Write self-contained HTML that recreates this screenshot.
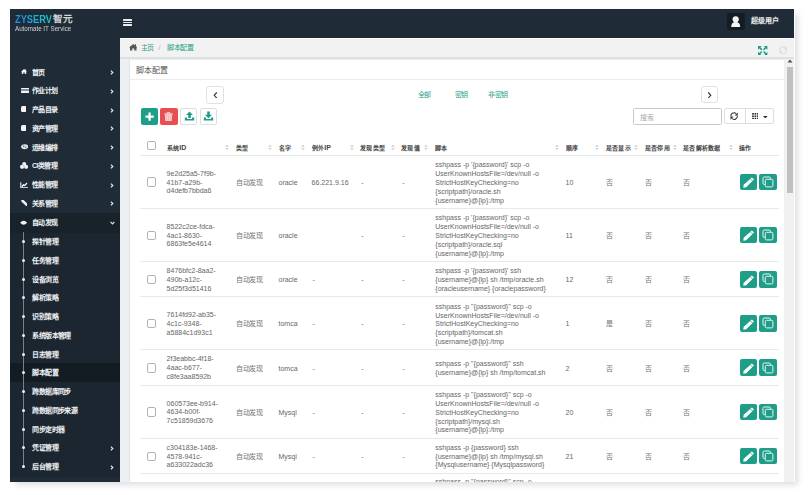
<!DOCTYPE html>
<html lang="zh-CN"><head><meta charset="utf-8"><style>
*{box-sizing:border-box;margin:0;padding:0}
html,body{width:808px;height:495px;overflow:hidden;background:#fff;font-family:"Liberation Sans",sans-serif;}
.abs{position:absolute}
#frame{position:absolute;left:10px;top:9px;width:784px;height:473px;background:#1f2b36;overflow:hidden}
#shadow{position:absolute;left:10px;top:9px;width:785.3px;height:473px;background:#fff;box-shadow:3.5px 3.5px 6px -1px rgba(0,0,0,0.13)}
.t{position:absolute;white-space:nowrap;line-height:1}
.side{color:#eef0f2;font-size:7px;font-weight:bold;letter-spacing:-0.55px}
.chev{position:absolute;left:110px;width:5px;height:5px}
.cell{position:absolute;white-space:nowrap;font-size:7px;color:#666;line-height:8.8px}
.cj{letter-spacing:-0.45px}
.cell .cj{color:#747474}
.hd{position:absolute;white-space:nowrap;font-size:7px;color:#444;font-weight:bold;line-height:7px}
.hd .cj{font-size:6px;letter-spacing:0.3px}
.cb{position:absolute;width:9.5px;height:9.5px;border:1px solid #b3b3b3;border-radius:2px;background:#fff}
.btn{position:absolute;border-radius:2px}
.hr{position:absolute;left:140px;width:639px;height:1px;background:#e9e9e9}
.sort{position:absolute;width:4px;height:7px}
</style></head>
<body>
<div class="abs" style="left:0;top:0;width:808px;height:495px;background:#fff"></div>
<div id="shadow"></div>
<div id="frame">
<div class="t" style="left:5px;top:4px;font-size:11.4px;transform:scaleX(0.815);transform-origin:0 0;font-weight:bold;background:linear-gradient(90deg,#1b8fe6 0%,#18b4dc 60%,#16d2c6 100%);-webkit-background-clip:text;color:transparent;line-height:12px">ZYSERV</div>
<div class="t" style="left:43.2px;top:5px;font-size:9.6px;color:#d2d4d6;font-weight:bold;line-height:10px">智元</div>
<div class="t" style="left:5.4px;top:16px;font-size:6.8px;color:#d0d3d6;line-height:7px;transform:scaleX(0.915);transform-origin:0 0">Automate IT Service</div>
<div class="abs" style="left:113.3px;top:9.9px;width:8.6px;height:1.9px;background:#ececec;border-radius:0.5px"></div>
<div class="abs" style="left:113.3px;top:12.55px;width:8.6px;height:1.9px;background:#ececec;border-radius:0.5px"></div>
<div class="abs" style="left:113.3px;top:15.2px;width:8.6px;height:1.9px;background:#ececec;border-radius:0.5px"></div>
<div class="abs" style="left:717px;top:4px;width:17.5px;height:16.7px;background:#151d24;border-radius:2px"></div>
<svg class="abs" style="left:721.4px;top:6.6px" width="9.4" height="11" viewBox="0 0 9.4 11"><circle cx="4.7" cy="3.3" r="3.1" fill="#f4f4f4"/><path d="M0.2 11 Q0.2 6 4.7 6 Q9.2 6 9.2 11Z" fill="#f4f4f4"/></svg>
<div class="t" style="left:741.3px;top:7.9px;font-size:7px;color:#f0f0f0;font-weight:bold;letter-spacing:-0.2px">超级用户</div>
<div class="abs" style="left:110px;top:28.6px;width:675px;height:445px;background:#ecf0f3"></div>
<div class="abs" style="left:110px;top:28.6px;width:675px;height:21.6px;background:#f2f2f2;border-top:1.3px solid #fbfbfb;border-bottom:2.4px solid #dfe0e1"></div>
<svg class="abs" style="left:118.9px;top:35.4px" width="8.5" height="6.5" viewBox="0 0 17 13"><path d="M8.5 0 L17 7 L15 7 L15 13 L10.5 13 L10.5 9 L6.5 9 L6.5 13 L2 13 L2 7 L0 7Z" fill="#555"/><rect x="12" y="0.5" width="2" height="3.5" fill="#555"/></svg>
<div class="t" style="left:130.8px;top:35px;font-size:7px;color:#1e9d89;letter-spacing:-0.4px">主页</div>
<div class="t" style="left:148.4px;top:35px;font-size:7px;color:#aaa">/</div>
<div class="t" style="left:157px;top:35px;font-size:7px;color:#1e9d89;letter-spacing:-0.4px">脚本配置</div>
<svg class="abs" style="left:748.2px;top:36.6px" width="9.4" height="9.4" viewBox="0 0 18 18">
<g fill="#1e9d89"><path d="M0 0 H7 L0 7Z"/><path d="M18 0 H11 L18 7Z"/><path d="M0 18 H7 L0 11Z"/><path d="M18 18 H11 L18 11Z"/></g>
<g stroke="#1e9d89" stroke-width="2.8" stroke-linecap="round"><path d="M2.5 2.5 L6.5 6.5"/><path d="M15.5 2.5 L11.5 6.5"/><path d="M2.5 15.5 L6.5 11.5"/><path d="M15.5 15.5 L11.5 11.5"/></g>
</svg>
<svg class="abs" style="left:769px;top:36.6px" width="8.4" height="8.4" viewBox="0 0 16 16"><g fill="none" stroke="#d9d9d9" stroke-width="2"><path d="M1.6 8.6 A6.4 6.4 0 0 1 11.8 2.9"/><path d="M14.4 7.4 A6.4 6.4 0 0 1 4.2 13.1"/></g><g fill="#d9d9d9"><path d="M15 0.8 L15 7 L9 7Z"/><path d="M1 15.2 L1 9 L7 9Z"/></g></svg>
<div class="abs" style="left:774.5px;top:49.5px;width:9.5px;height:423.5px;background:#f1f1f1"></div>
<svg class="abs" style="left:776.5px;top:50.3px" width="6" height="4" viewBox="0 0 6 4"><path d="M0.5 3.5 L3 0.6 L5.5 3.5Z" fill="#505050"/></svg>
<div class="abs" style="left:777px;top:58px;width:6.3px;height:125.5px;background:#c1c1c1"></div>
<div class="abs" style="left:119.4px;top:50.4px;width:655.1px;height:422.6px;background:#fff;border-left:1px solid #e3e5e7;border-top:0.6px solid #eceef0"></div>
<div class="t" style="left:126.4px;top:57.6px;font-size:8px;color:#555;letter-spacing:-0.2px">脚本配置</div>
<div class="abs" style="left:120.4px;top:70.4px;width:654px;height:1px;background:#ececec"></div>
</div>
<div class="abs" style="left:0;top:0;width:808px;height:482px;overflow:hidden">
<div class="abs" style="left:10px;top:213px;width:110px;height:19.5px;background:#17222a"></div>
<div class="abs" style="left:10px;top:232.5px;width:110px;height:244px;background:#1b2630"></div>
<div class="abs" style="left:10px;top:363.4px;width:110px;height:18.8px;background:#141c23"></div>
<div class="abs" style="left:20.6px;top:69.0px;width:6px;height:5.2px;line-height:0"><svg width="6" height="5.2" viewBox="0 0 12 10.4"><path d="M6 0 L12 5.4 L10.4 5.4 L10.4 10.4 L7.4 10.4 L7.4 7 L4.6 7 L4.6 10.4 L1.6 10.4 L1.6 5.4 L0 5.4Z" fill="#f4f4f4"/><rect x="8.4" y="0.6" width="1.8" height="3.4" fill="#f4f4f4"/></svg></div>
<div class="t side" style="left:32px;top:68.5px">首页</div>
<svg class="abs" style="left:109.8px;top:70px" width="4" height="5" viewBox="0 0 8 10"><path d="M1.8 1.2 L5.6 5 L1.8 8.8" stroke="#e6e6e6" stroke-width="2.4" fill="none"/></svg>
<div class="abs" style="left:20.6px;top:87.8px;width:8.2px;height:5.3px;line-height:0"><svg width="8.2" height="5.3" viewBox="0 0 8.2 5.3"><rect x="0" y="0" width="8.2" height="1.4" rx="0.4" fill="#f4f4f4"/><rect x="0" y="1.4" width="8.2" height="1.6" fill="#8a9097"/><rect x="0" y="3" width="8.2" height="2.3" rx="0.4" fill="#f4f4f4"/></svg></div>
<div class="t side" style="left:32px;top:87.3px">作业计划</div>
<svg class="abs" style="left:109.8px;top:88.8px" width="4" height="5" viewBox="0 0 8 10"><path d="M1.8 1.2 L5.6 5 L1.8 8.8" stroke="#e6e6e6" stroke-width="2.4" fill="none"/></svg>
<div class="abs" style="left:20.6px;top:106.0px;width:5.5px;height:6.1px;line-height:0"><svg width="5.5" height="6.1" viewBox="0 0 5.5 6.1"><rect x="0" y="0" width="5.5" height="6.1" rx="1.6" fill="#f4f4f4"/></svg></div>
<div class="t side" style="left:32px;top:106.0px">产品目录</div>
<svg class="abs" style="left:109.8px;top:107.5px" width="4" height="5" viewBox="0 0 8 10"><path d="M1.8 1.2 L5.6 5 L1.8 8.8" stroke="#e6e6e6" stroke-width="2.4" fill="none"/></svg>
<div class="abs" style="left:20.6px;top:124.8px;width:5.5px;height:6.1px;line-height:0"><svg width="5.5" height="6.1" viewBox="0 0 5.5 6.1"><rect x="0" y="0" width="5.5" height="6.1" rx="1.6" fill="#f4f4f4"/></svg></div>
<div class="t side" style="left:32px;top:124.9px">资产管理</div>
<svg class="abs" style="left:109.8px;top:126.4px" width="4" height="5" viewBox="0 0 8 10"><path d="M1.8 1.2 L5.6 5 L1.8 8.8" stroke="#e6e6e6" stroke-width="2.4" fill="none"/></svg>
<div class="abs" style="left:20.6px;top:144.3px;width:7.3px;height:5.3px;line-height:0"><svg width="7.3" height="5.3" viewBox="0 0 14.6 10.6"><ellipse cx="7.3" cy="5.3" rx="7.1" ry="5" fill="#dde0e3"/><circle cx="5.3" cy="4.3" r="1.2" fill="#3a4650"/><circle cx="9.3" cy="6.2" r="1.2" fill="#3a4650"/></svg></div>
<div class="t side" style="left:32px;top:143.5px">运维编排</div>
<svg class="abs" style="left:109.8px;top:145px" width="4" height="5" viewBox="0 0 8 10"><path d="M1.8 1.2 L5.6 5 L1.8 8.8" stroke="#e6e6e6" stroke-width="2.4" fill="none"/></svg>
<div class="abs" style="left:20.2px;top:162.0px;width:8.2px;height:7px;line-height:0"><svg width="8.2" height="7" viewBox="0 0 16.4 14"><circle cx="8.4" cy="4.2" r="4" fill="#eeeeee"/><circle cx="4.2" cy="9.6" r="4.2" fill="#f4f4f4"/><circle cx="12.2" cy="9.6" r="4.2" fill="#eeeeee"/><path d="M5 6 L8 9" stroke="#6d767e" stroke-width="1"/></svg></div>
<div class="t side" style="left:32px;top:162.3px">CI类管理</div>
<svg class="abs" style="left:109.8px;top:163.8px" width="4" height="5" viewBox="0 0 8 10"><path d="M1.8 1.2 L5.6 5 L1.8 8.8" stroke="#e6e6e6" stroke-width="2.4" fill="none"/></svg>
<div class="abs" style="left:20.0px;top:181.6px;width:8px;height:6.4px;line-height:0"><svg width="8" height="6.4" viewBox="0 0 16 12.8"><path d="M1.5 0.5 V11.3 H16" stroke="#c9cdd1" stroke-width="2.6" fill="none"/><path d="M3.5 9.5 L7 5.5 L9.5 7 L14 2" stroke="#f4f4f4" stroke-width="2.6" fill="none" stroke-linejoin="round"/></svg></div>
<div class="t side" style="left:32px;top:181.0px">性能管理</div>
<svg class="abs" style="left:109.8px;top:182.5px" width="4" height="5" viewBox="0 0 8 10"><path d="M1.8 1.2 L5.6 5 L1.8 8.8" stroke="#e6e6e6" stroke-width="2.4" fill="none"/></svg>
<div class="abs" style="left:20.6px;top:200.0px;width:6.5px;height:6.2px;line-height:0"><svg width="6.5" height="6.2" viewBox="0 0 13 12.4"><path d="M3 1.5 L11.5 9.5" stroke="#eeeeee" stroke-width="5.2" stroke-linecap="round"/></svg></div>
<div class="t side" style="left:32px;top:199.8px">关系管理</div>
<svg class="abs" style="left:109.8px;top:201.3px" width="4" height="5" viewBox="0 0 8 10"><path d="M1.8 1.2 L5.6 5 L1.8 8.8" stroke="#e6e6e6" stroke-width="2.4" fill="none"/></svg>
<div class="abs" style="left:20.2px;top:219.6px;width:7.3px;height:5.4px;line-height:0"><svg width="7.3" height="5.4" viewBox="0 0 14.6 10.8"><path d="M0.3 5.4 Q7.3 -2.6 14.3 5.4 Q7.3 13.4 0.3 5.4Z" fill="#f4f4f4"/></svg></div>
<div class="t side" style="left:32px;top:218.5px">自动发现</div>
<svg class="abs" style="left:110px;top:220.8px" width="5" height="4" viewBox="0 0 10 8"><path d="M1.2 1.8 L5 5.6 L8.8 1.8" stroke="#e6e6e6" stroke-width="2.4" fill="none"/></svg>
<div class="abs" style="left:23.1px;top:232px;width:1px;height:235px;background:#7a8188"></div>
<div class="abs" style="left:22.1px;top:240.1px;width:3px;height:3px;border-radius:50%;background:#f2f2f2"></div>
<div class="t side" style="left:32.2px;top:238.0px">探针管理</div>
<div class="abs" style="left:22.1px;top:258.85px;width:3px;height:3px;border-radius:50%;background:#f2f2f2"></div>
<div class="t side" style="left:32.2px;top:256.75px">任务管理</div>
<div class="abs" style="left:22.1px;top:277.6px;width:3px;height:3px;border-radius:50%;background:#f2f2f2"></div>
<div class="t side" style="left:32.2px;top:275.5px">设备浏览</div>
<div class="abs" style="left:22.1px;top:296.35px;width:3px;height:3px;border-radius:50%;background:#f2f2f2"></div>
<div class="t side" style="left:32.2px;top:294.25px">解析策略</div>
<div class="abs" style="left:22.1px;top:315.1px;width:3px;height:3px;border-radius:50%;background:#f2f2f2"></div>
<div class="t side" style="left:32.2px;top:313.0px">识别策略</div>
<div class="abs" style="left:22.1px;top:333.85px;width:3px;height:3px;border-radius:50%;background:#f2f2f2"></div>
<div class="t side" style="left:32.2px;top:331.75px">系统版本管理</div>
<div class="abs" style="left:22.1px;top:352.6px;width:3px;height:3px;border-radius:50%;background:#f2f2f2"></div>
<div class="t side" style="left:32.2px;top:350.5px">日志管理</div>
<div class="abs" style="left:22.1px;top:371.35px;width:3px;height:3px;border-radius:50%;background:#f2f2f2"></div>
<div class="t side" style="left:32.2px;top:369.25px">脚本配置</div>
<div class="abs" style="left:22.1px;top:390.1px;width:3px;height:3px;border-radius:50%;background:#f2f2f2"></div>
<div class="t side" style="left:32.2px;top:388.0px">跨数据库同步</div>
<div class="abs" style="left:22.1px;top:408.85px;width:3px;height:3px;border-radius:50%;background:#f2f2f2"></div>
<div class="t side" style="left:32.2px;top:406.75px">跨数据同步来源</div>
<div class="abs" style="left:22.1px;top:427.6px;width:3px;height:3px;border-radius:50%;background:#f2f2f2"></div>
<div class="t side" style="left:32.2px;top:425.5px">同步定时器</div>
<div class="abs" style="left:22.1px;top:446.35px;width:3px;height:3px;border-radius:50%;background:#f2f2f2"></div>
<div class="t side" style="left:32.2px;top:444.25px">凭证管理</div>
<svg class="abs" style="left:109.8px;top:445.75px" width="4" height="5" viewBox="0 0 8 10"><path d="M1.8 1.2 L5.6 5 L1.8 8.8" stroke="#e6e6e6" stroke-width="2.4" fill="none"/></svg>
<div class="abs" style="left:22.1px;top:465.1px;width:3px;height:3px;border-radius:50%;background:#f2f2f2"></div>
<div class="t side" style="left:32.2px;top:463.0px">后台管理</div>
<svg class="abs" style="left:109.8px;top:464.5px" width="4" height="5" viewBox="0 0 8 10"><path d="M1.8 1.2 L5.6 5 L1.8 8.8" stroke="#e6e6e6" stroke-width="2.4" fill="none"/></svg>
<div class="abs" style="left:206.3px;top:86.3px;width:17.7px;height:17.3px;border:1px solid #e0e0e0;border-radius:3px;background:#fff"></div>
<svg class="abs" style="left:212.6px;top:91.8px" width="5" height="6.6" viewBox="0 0 5 6.6"><path d="M3.8 0.5 L1.2 3.3 L3.8 6.1" stroke="#3a3a3a" stroke-width="1.15" fill="none"/></svg>
<div class="abs" style="left:700.5px;top:86.4px;width:17.9px;height:17.1px;border:1px solid #e0e0e0;border-radius:3px;background:#fff"></div>
<svg class="abs" style="left:707.2px;top:91.8px" width="5" height="6.6" viewBox="0 0 5 6.6"><path d="M1.2 0.5 L3.8 3.3 L1.2 6.1" stroke="#3a3a3a" stroke-width="1.15" fill="none"/></svg>
<div class="t" style="left:417.8px;top:90.8px;font-size:7px;color:#1e9d89;letter-spacing:-0.45px">全部</div>
<div class="t" style="left:454.5px;top:90.8px;font-size:7px;color:#1e9d89;letter-spacing:-0.45px">密钥</div>
<div class="t" style="left:488px;top:90.8px;font-size:7px;color:#1e9d89;letter-spacing:-0.45px">非密钥</div>
<div class="btn" style="left:140.6px;top:108px;width:17.6px;height:16.7px;background:#1e9d89"></div>
<svg class="abs" style="left:144.8px;top:111.8px" width="9.2" height="9.2" viewBox="0 0 10 10"><path d="M5 0.5 V9.5 M0.5 5 H9.5" stroke="#fff" stroke-width="2.4"/></svg>
<div class="btn" style="left:160.4px;top:108px;width:17.5px;height:16.7px;background:#e84f50"></div>
<svg class="abs" style="left:164.4px;top:111.9px" width="9" height="9.5" viewBox="0 0 9 9.5"><path d="M0.3 2 H8.7" stroke="#fbe3e3" stroke-width="1.1"/><path d="M3.2 1.8 V0.6 H5.8 V1.8" fill="none" stroke="#fbe3e3" stroke-width="0.9"/><path d="M1.4 3 L1.9 9 L7.1 9 L7.6 3Z" fill="#f3b3b5" stroke="#fbe3e3" stroke-width="0.9"/><path d="M3.5 4.2 V7.8 M5.5 4.2 V7.8" stroke="#fbe3e3" stroke-width="0.7"/></svg>
<div class="btn" style="left:180.3px;top:108px;width:17.1px;height:16.7px;border:1px solid #dedede;background:#fff"></div>
<svg class="abs" style="left:183.5px;top:111.3px" width="11" height="10" viewBox="0 0 11 10" fill="#1e9d89"><path d="M5.5 0.5 L9 4 L6.8 4 L6.8 7 L4.2 7 L4.2 4 L2 4Z"/><path d="M0.8 6.5 L3 6.5 L3 8 L8 8 L8 6.5 L10.2 6.5 L10.2 9.6 L0.8 9.6Z"/></svg>
<div class="btn" style="left:200.1px;top:108px;width:17.3px;height:16.7px;border:1px solid #dedede;background:#fff"></div>
<svg class="abs" style="left:203.3px;top:111.3px" width="11" height="10" viewBox="0 0 11 10" fill="#1e9d89"><path d="M5.5 7.2 L9 3.7 L6.8 3.7 L6.8 0.5 L4.2 0.5 L4.2 3.7 L2 3.7Z"/><path d="M0.8 6.5 L3 6.5 L3 8 L8 8 L8 6.5 L10.2 6.5 L10.2 9.6 L0.8 9.6Z"/></svg>
<div class="abs" style="left:633.2px;top:108.2px;width:88.6px;height:16.6px;border:1px solid #c9c9c9;border-radius:1.5px;background:#fff"></div>
<div class="t" style="left:640px;top:113.6px;font-size:7px;color:#aaa;letter-spacing:-0.45px">搜索</div>
<div class="abs" style="left:724.1px;top:108.3px;width:50.3px;height:15.5px;border:1px solid #dedede;border-radius:2px;background:#fff"></div>
<div class="abs" style="left:745.2px;top:108.3px;width:1px;height:15.5px;background:#dedede"></div>
<svg class="abs" style="left:729.8px;top:111.6px" width="8.2" height="8.2" viewBox="0 0 16 16"><g fill="none" stroke="#333" stroke-width="2"><path d="M1.6 8.6 A6.4 6.4 0 0 1 11.8 2.9"/><path d="M14.4 7.4 A6.4 6.4 0 0 1 4.2 13.1"/></g><g fill="#333"><path d="M15 0.8 L15 7 L9 7Z"/><path d="M1 15.2 L1 9 L7 9Z"/></g></svg>
<svg class="abs" style="left:751.6px;top:112.8px" width="6.8" height="6.5" viewBox="0 0 7 7" fill="#333"><rect x="0" y="0" width="1.8" height="1.8"/><rect x="2.6" y="0" width="1.8" height="1.8"/><rect x="5.2" y="0" width="1.8" height="1.8"/><rect x="0" y="2.6" width="1.8" height="1.8"/><rect x="2.6" y="2.6" width="1.8" height="1.8"/><rect x="5.2" y="2.6" width="1.8" height="1.8"/><rect x="0" y="5.2" width="1.8" height="1.8"/><rect x="2.6" y="5.2" width="1.8" height="1.8"/><rect x="5.2" y="5.2" width="1.8" height="1.8"/></svg>
<svg class="abs" style="left:763.2px;top:115.6px" width="4.6" height="2.6" viewBox="0 0 4.6 2.6"><path d="M0 0 H4.6 L2.3 2.6Z" fill="#333"/></svg>
<div class="cb" style="left:146.8px;top:140.8px"></div>
<div class="hd" style="left:166.6px;top:143.8px"><span class="cj">系统</span>ID</div>
<svg class="sort" style="left:225px;top:144.2px" width="4.2" height="6.8" viewBox="0 0 4.2 6.8"><path d="M0.2 3 L2.1 0.3 L4 3Z M0.2 3.8 L2.1 6.5 L4 3.8Z" fill="#d5d5d5"/></svg>
<div class="hd" style="left:236px;top:143.8px"><span class="cj">类型</span></div>
<svg class="sort" style="left:268px;top:144.2px" width="4.2" height="6.8" viewBox="0 0 4.2 6.8"><path d="M0.2 3 L2.1 0.3 L4 3Z M0.2 3.8 L2.1 6.5 L4 3.8Z" fill="#d5d5d5"/></svg>
<div class="hd" style="left:278.5px;top:143.8px"><span class="cj">名字</span></div>
<svg class="sort" style="left:301px;top:144.2px" width="4.2" height="6.8" viewBox="0 0 4.2 6.8"><path d="M0.2 3 L2.1 0.3 L4 3Z M0.2 3.8 L2.1 6.5 L4 3.8Z" fill="#d5d5d5"/></svg>
<div class="hd" style="left:311.6px;top:143.8px"><span class="cj">例外</span>IP</div>
<svg class="sort" style="left:349.5px;top:144.2px" width="4.2" height="6.8" viewBox="0 0 4.2 6.8"><path d="M0.2 3 L2.1 0.3 L4 3Z M0.2 3.8 L2.1 6.5 L4 3.8Z" fill="#d5d5d5"/></svg>
<div class="hd" style="left:360px;top:143.8px"><span class="cj">发现类型</span></div>
<svg class="sort" style="left:390.8px;top:144.2px" width="4.2" height="6.8" viewBox="0 0 4.2 6.8"><path d="M0.2 3 L2.1 0.3 L4 3Z M0.2 3.8 L2.1 6.5 L4 3.8Z" fill="#d5d5d5"/></svg>
<div class="hd" style="left:401px;top:143.8px"><span class="cj">发现值</span></div>
<svg class="sort" style="left:424px;top:144.2px" width="4.2" height="6.8" viewBox="0 0 4.2 6.8"><path d="M0.2 3 L2.1 0.3 L4 3Z M0.2 3.8 L2.1 6.5 L4 3.8Z" fill="#d5d5d5"/></svg>
<div class="hd" style="left:435px;top:143.8px"><span class="cj">脚本</span></div>
<svg class="sort" style="left:555.4px;top:144.2px" width="4.2" height="6.8" viewBox="0 0 4.2 6.8"><path d="M0.2 3 L2.1 0.3 L4 3Z M0.2 3.8 L2.1 6.5 L4 3.8Z" fill="#d5d5d5"/></svg>
<div class="hd" style="left:565.6px;top:143.8px"><span class="cj">顺序</span></div>
<svg class="sort" style="left:595px;top:144.2px" width="4.2" height="6.8" viewBox="0 0 4.2 6.8"><path d="M0.2 3 L2.1 0.3 L4 3Z M0.2 3.8 L2.1 6.5 L4 3.8Z" fill="#d5d5d5"/></svg>
<div class="hd" style="left:605.7px;top:143.8px"><span class="cj">是否显示</span></div>
<svg class="sort" style="left:633.6px;top:144.2px" width="4.2" height="6.8" viewBox="0 0 4.2 6.8"><path d="M0.2 3 L2.1 0.3 L4 3Z M0.2 3.8 L2.1 6.5 L4 3.8Z" fill="#d5d5d5"/></svg>
<div class="hd" style="left:644.8px;top:143.8px"><span class="cj">是否停用</span></div>
<svg class="sort" style="left:672.6px;top:144.2px" width="4.2" height="6.8" viewBox="0 0 4.2 6.8"><path d="M0.2 3 L2.1 0.3 L4 3Z M0.2 3.8 L2.1 6.5 L4 3.8Z" fill="#d5d5d5"/></svg>
<div class="hd" style="left:683px;top:143.8px"><span class="cj">是否解析数据</span></div>
<svg class="sort" style="left:728.7px;top:144.2px" width="4.2" height="6.8" viewBox="0 0 4.2 6.8"><path d="M0.2 3 L2.1 0.3 L4 3Z M0.2 3.8 L2.1 6.5 L4 3.8Z" fill="#d5d5d5"/></svg>
<div class="hd" style="left:739px;top:143.8px"><span class="cj">操作</span></div>
<div class="hr" style="top:154.5px"></div>
<div class="cb" style="left:146.8px;top:177.45px"></div>
<div class="cell" style="left:166.6px;top:169.75px">9e2d25a5-7f9b-<br>41b7-a29b-<br>d4defb7bbda6</div>
<div class="cell" style="left:236.00px;top:179.05px"><span class="cj">自动发现</span></div>
<div class="cell" style="left:278.50px;top:179.05px">oracle</div>
<div class="cell" style="left:311.60px;top:179.05px">66.221.9.16</div>
<div class="cell" style="left:361.30px;top:179.05px">-</div>
<div class="cell" style="left:402.30px;top:179.05px">-</div>
<div class="cell" style="left:565.60px;top:179.05px">10</div>
<div class="cell" style="left:605.70px;top:179.05px"><span class="cj">否</span></div>
<div class="cell" style="left:644.80px;top:179.05px"><span class="cj">否</span></div>
<div class="cell" style="left:683.00px;top:179.05px"><span class="cj">否</span></div>
<div class="cell" style="left:435.3px;top:161.35px">sshpass -p &#x27;{password}&#x27; scp -o<br>UserKnownHostsFile=/dev/null -o<br>StrictHostKeyChecking=no<br>{scriptpath}/oracle.sh<br>{username}@{ip}:/tmp</div>
<div class="btn" style="left:739.6px;top:173.75px;width:17.4px;height:16.6px;background:#1e9d89"></div>
<svg class="abs" style="left:742.6px;top:177.25px" width="11.4" height="11" viewBox="0 0 11.4 11"><path d="M8.9 0.4 L11 2.5 L3.2 10.3 L0.3 10.7 L0.7 7.8Z" fill="#fff"/><path d="M7.4 1.9 L9.5 4" stroke="#1e9d89" stroke-width="0.7"/></svg>
<div class="btn" style="left:759.2px;top:173.75px;width:17.6px;height:16.6px;background:#1e9d89"></div>
<svg class="abs" style="left:761.8px;top:176.05px" width="12" height="12" viewBox="0 0 12 12" fill="none" stroke="#e8f5f2" stroke-width="1"><path d="M8.5 3 V2.3 Q8.5 1 7.2 1 H2.3 Q1 1 1 2.3 V7.2 Q1 8.5 2.3 8.5 H3"/><rect x="3.3" y="3.3" width="7.6" height="7.6" rx="1.2"/></svg>
<div class="hr" style="top:207.90px"></div>
<div class="cb" style="left:146.8px;top:230.55px"></div>
<div class="cell" style="left:166.6px;top:222.85px">8522c2ce-fdca-<br>4ac1-8630-<br>6863fe5e4614</div>
<div class="cell" style="left:236.00px;top:232.15px"><span class="cj">自动发现</span></div>
<div class="cell" style="left:278.50px;top:232.15px">oracle</div>
<div class="cell" style="left:361.30px;top:232.15px">-</div>
<div class="cell" style="left:402.30px;top:232.15px">-</div>
<div class="cell" style="left:565.60px;top:232.15px">11</div>
<div class="cell" style="left:605.70px;top:232.15px"><span class="cj">否</span></div>
<div class="cell" style="left:644.80px;top:232.15px"><span class="cj">否</span></div>
<div class="cell" style="left:683.00px;top:232.15px"><span class="cj">否</span></div>
<div class="cell" style="left:435.3px;top:214.45px">sshpass -p &#x27;{password}&#x27; scp -o<br>UserKnownHostsFile=/dev/null -o<br>StrictHostKeyChecking=no<br>{scriptpath}/oracle.sql<br>{username}@{ip}:/tmp</div>
<div class="btn" style="left:739.6px;top:226.85px;width:17.4px;height:16.6px;background:#1e9d89"></div>
<svg class="abs" style="left:742.6px;top:230.35px" width="11.4" height="11" viewBox="0 0 11.4 11"><path d="M8.9 0.4 L11 2.5 L3.2 10.3 L0.3 10.7 L0.7 7.8Z" fill="#fff"/><path d="M7.4 1.9 L9.5 4" stroke="#1e9d89" stroke-width="0.7"/></svg>
<div class="btn" style="left:759.2px;top:226.85px;width:17.6px;height:16.6px;background:#1e9d89"></div>
<svg class="abs" style="left:761.8px;top:229.15px" width="12" height="12" viewBox="0 0 12 12" fill="none" stroke="#e8f5f2" stroke-width="1"><path d="M8.5 3 V2.3 Q8.5 1 7.2 1 H2.3 Q1 1 1 2.3 V7.2 Q1 8.5 2.3 8.5 H3"/><rect x="3.3" y="3.3" width="7.6" height="7.6" rx="1.2"/></svg>
<div class="hr" style="top:261.00px"></div>
<div class="cb" style="left:146.8px;top:274.75px"></div>
<div class="cell" style="left:166.6px;top:267.05px">8476bfc2-8aa2-<br>490b-a12c-<br>5d25f3d51416</div>
<div class="cell" style="left:236.00px;top:276.35px"><span class="cj">自动发现</span></div>
<div class="cell" style="left:278.50px;top:276.35px">oracle</div>
<div class="cell" style="left:312.40px;top:276.35px">-</div>
<div class="cell" style="left:361.30px;top:276.35px">-</div>
<div class="cell" style="left:402.30px;top:276.35px">-</div>
<div class="cell" style="left:565.60px;top:276.35px">12</div>
<div class="cell" style="left:605.70px;top:276.35px"><span class="cj">否</span></div>
<div class="cell" style="left:644.80px;top:276.35px"><span class="cj">否</span></div>
<div class="cell" style="left:683.00px;top:276.35px"><span class="cj">否</span></div>
<div class="cell" style="left:435.3px;top:267.05px">sshpass -p &#x27;{password}&#x27; ssh<br>{username}@{ip} sh /tmp/oracle.sh<br>{oracleusername} {oraclepassword}</div>
<div class="btn" style="left:739.6px;top:271.05px;width:17.4px;height:16.6px;background:#1e9d89"></div>
<svg class="abs" style="left:742.6px;top:274.55px" width="11.4" height="11" viewBox="0 0 11.4 11"><path d="M8.9 0.4 L11 2.5 L3.2 10.3 L0.3 10.7 L0.7 7.8Z" fill="#fff"/><path d="M7.4 1.9 L9.5 4" stroke="#1e9d89" stroke-width="0.7"/></svg>
<div class="btn" style="left:759.2px;top:271.05px;width:17.6px;height:16.6px;background:#1e9d89"></div>
<svg class="abs" style="left:761.8px;top:273.35px" width="12" height="12" viewBox="0 0 12 12" fill="none" stroke="#e8f5f2" stroke-width="1"><path d="M8.5 3 V2.3 Q8.5 1 7.2 1 H2.3 Q1 1 1 2.3 V7.2 Q1 8.5 2.3 8.5 H3"/><rect x="3.3" y="3.3" width="7.6" height="7.6" rx="1.2"/></svg>
<div class="hr" style="top:296.30px"></div>
<div class="cb" style="left:146.8px;top:318.85px"></div>
<div class="cell" style="left:166.6px;top:311.15px">7614fd92-ab35-<br>4c1c-9348-<br>a5884c1d93c1</div>
<div class="cell" style="left:236.00px;top:320.45px"><span class="cj">自动发现</span></div>
<div class="cell" style="left:278.50px;top:320.45px">tomca</div>
<div class="cell" style="left:312.40px;top:320.45px">-</div>
<div class="cell" style="left:361.30px;top:320.45px">-</div>
<div class="cell" style="left:402.30px;top:320.45px">-</div>
<div class="cell" style="left:565.60px;top:320.45px">1</div>
<div class="cell" style="left:605.70px;top:320.45px"><span class="cj">是</span></div>
<div class="cell" style="left:644.80px;top:320.45px"><span class="cj">否</span></div>
<div class="cell" style="left:683.00px;top:320.45px"><span class="cj">否</span></div>
<div class="cell" style="left:435.3px;top:302.75px">sshpass -p &quot;{password}&quot; scp -o<br>UserKnownHostsFile=/dev/null -o<br>StrictHostKeyChecking=no<br>{scriptpath}/tomcat.sh<br>{username}@{ip}:/tmp</div>
<div class="btn" style="left:739.6px;top:315.15px;width:17.4px;height:16.6px;background:#1e9d89"></div>
<svg class="abs" style="left:742.6px;top:318.65px" width="11.4" height="11" viewBox="0 0 11.4 11"><path d="M8.9 0.4 L11 2.5 L3.2 10.3 L0.3 10.7 L0.7 7.8Z" fill="#fff"/><path d="M7.4 1.9 L9.5 4" stroke="#1e9d89" stroke-width="0.7"/></svg>
<div class="btn" style="left:759.2px;top:315.15px;width:17.6px;height:16.6px;background:#1e9d89"></div>
<svg class="abs" style="left:761.8px;top:317.45px" width="12" height="12" viewBox="0 0 12 12" fill="none" stroke="#e8f5f2" stroke-width="1"><path d="M8.5 3 V2.3 Q8.5 1 7.2 1 H2.3 Q1 1 1 2.3 V7.2 Q1 8.5 2.3 8.5 H3"/><rect x="3.3" y="3.3" width="7.6" height="7.6" rx="1.2"/></svg>
<div class="hr" style="top:349.20px"></div>
<div class="cb" style="left:146.8px;top:363.00px"></div>
<div class="cell" style="left:166.6px;top:355.30px">2f3eabbc-4f18-<br>4aac-b677-<br>c8fe3aa8592b</div>
<div class="cell" style="left:236.00px;top:364.60px"><span class="cj">自动发现</span></div>
<div class="cell" style="left:278.50px;top:364.60px">tomca</div>
<div class="cell" style="left:312.40px;top:364.60px">-</div>
<div class="cell" style="left:361.30px;top:364.60px">-</div>
<div class="cell" style="left:402.30px;top:364.60px">-</div>
<div class="cell" style="left:565.60px;top:364.60px">2</div>
<div class="cell" style="left:605.70px;top:364.60px"><span class="cj">否</span></div>
<div class="cell" style="left:644.80px;top:364.60px"><span class="cj">否</span></div>
<div class="cell" style="left:683.00px;top:364.60px"><span class="cj">否</span></div>
<div class="cell" style="left:435.3px;top:359.80px">sshpass -p &quot;{password}&quot; ssh<br>{username}@{ip} sh /tmp/tomcat.sh</div>
<div class="btn" style="left:739.6px;top:359.30px;width:17.4px;height:16.6px;background:#1e9d89"></div>
<svg class="abs" style="left:742.6px;top:362.80px" width="11.4" height="11" viewBox="0 0 11.4 11"><path d="M8.9 0.4 L11 2.5 L3.2 10.3 L0.3 10.7 L0.7 7.8Z" fill="#fff"/><path d="M7.4 1.9 L9.5 4" stroke="#1e9d89" stroke-width="0.7"/></svg>
<div class="btn" style="left:759.2px;top:359.30px;width:17.6px;height:16.6px;background:#1e9d89"></div>
<svg class="abs" style="left:761.8px;top:361.60px" width="12" height="12" viewBox="0 0 12 12" fill="none" stroke="#e8f5f2" stroke-width="1"><path d="M8.5 3 V2.3 Q8.5 1 7.2 1 H2.3 Q1 1 1 2.3 V7.2 Q1 8.5 2.3 8.5 H3"/><rect x="3.3" y="3.3" width="7.6" height="7.6" rx="1.2"/></svg>
<div class="hr" style="top:384.60px"></div>
<div class="cb" style="left:146.8px;top:407.30px"></div>
<div class="cell" style="left:166.6px;top:399.60px">060573ee-b914-<br>4634-b00f-<br>7c51859d3676</div>
<div class="cell" style="left:236.00px;top:408.90px"><span class="cj">自动发现</span></div>
<div class="cell" style="left:278.50px;top:408.90px">Mysql</div>
<div class="cell" style="left:312.40px;top:408.90px">-</div>
<div class="cell" style="left:361.30px;top:408.90px">-</div>
<div class="cell" style="left:402.30px;top:408.90px">-</div>
<div class="cell" style="left:565.60px;top:408.90px">20</div>
<div class="cell" style="left:605.70px;top:408.90px"><span class="cj">否</span></div>
<div class="cell" style="left:644.80px;top:408.90px"><span class="cj">否</span></div>
<div class="cell" style="left:683.00px;top:408.90px"><span class="cj">否</span></div>
<div class="cell" style="left:435.3px;top:391.20px">sshpass -p &quot;{password}&quot; scp -o<br>UserKnownHostsFile=/dev/null -o<br>StrictHostKeyChecking=no<br>{scriptpath}/mysql.sh<br>{username}@{ip}:/tmp</div>
<div class="btn" style="left:739.6px;top:403.60px;width:17.4px;height:16.6px;background:#1e9d89"></div>
<svg class="abs" style="left:742.6px;top:407.10px" width="11.4" height="11" viewBox="0 0 11.4 11"><path d="M8.9 0.4 L11 2.5 L3.2 10.3 L0.3 10.7 L0.7 7.8Z" fill="#fff"/><path d="M7.4 1.9 L9.5 4" stroke="#1e9d89" stroke-width="0.7"/></svg>
<div class="btn" style="left:759.2px;top:403.60px;width:17.6px;height:16.6px;background:#1e9d89"></div>
<svg class="abs" style="left:761.8px;top:405.90px" width="12" height="12" viewBox="0 0 12 12" fill="none" stroke="#e8f5f2" stroke-width="1"><path d="M8.5 3 V2.3 Q8.5 1 7.2 1 H2.3 Q1 1 1 2.3 V7.2 Q1 8.5 2.3 8.5 H3"/><rect x="3.3" y="3.3" width="7.6" height="7.6" rx="1.2"/></svg>
<div class="hr" style="top:437.80px"></div>
<div class="cb" style="left:146.8px;top:451.60px"></div>
<div class="cell" style="left:166.6px;top:443.90px">c304183e-1468-<br>4578-941c-<br>a633022adc36</div>
<div class="cell" style="left:236.00px;top:453.20px"><span class="cj">自动发现</span></div>
<div class="cell" style="left:278.50px;top:453.20px">Mysql</div>
<div class="cell" style="left:312.40px;top:453.20px">-</div>
<div class="cell" style="left:361.30px;top:453.20px">-</div>
<div class="cell" style="left:402.30px;top:453.20px">-</div>
<div class="cell" style="left:565.60px;top:453.20px">21</div>
<div class="cell" style="left:605.70px;top:453.20px"><span class="cj">否</span></div>
<div class="cell" style="left:644.80px;top:453.20px"><span class="cj">否</span></div>
<div class="cell" style="left:683.00px;top:453.20px"><span class="cj">否</span></div>
<div class="cell" style="left:435.3px;top:443.90px">sshpass -p {password} ssh<br>{username}@{ip} sh /tmp/mysql.sh<br>{Mysqlusername} {Mysqlpassword}</div>
<div class="btn" style="left:739.6px;top:447.90px;width:17.4px;height:16.6px;background:#1e9d89"></div>
<svg class="abs" style="left:742.6px;top:451.40px" width="11.4" height="11" viewBox="0 0 11.4 11"><path d="M8.9 0.4 L11 2.5 L3.2 10.3 L0.3 10.7 L0.7 7.8Z" fill="#fff"/><path d="M7.4 1.9 L9.5 4" stroke="#1e9d89" stroke-width="0.7"/></svg>
<div class="btn" style="left:759.2px;top:447.90px;width:17.6px;height:16.6px;background:#1e9d89"></div>
<svg class="abs" style="left:761.8px;top:450.20px" width="12" height="12" viewBox="0 0 12 12" fill="none" stroke="#e8f5f2" stroke-width="1"><path d="M8.5 3 V2.3 Q8.5 1 7.2 1 H2.3 Q1 1 1 2.3 V7.2 Q1 8.5 2.3 8.5 H3"/><rect x="3.3" y="3.3" width="7.6" height="7.6" rx="1.2"/></svg>
<div class="hr" style="top:473.20px"></div>
<div class="cell" style="left:435.3px;top:478.20px">sshpass -p &quot;{password}&quot; scp -o<br>UserKnownHostsFile=/dev/null -o<br>StrictHostKeyChecking=no<br>{scriptpath}/x.sh<br>{username}@{ip}:/tmp</div>
</div>
</body></html>
